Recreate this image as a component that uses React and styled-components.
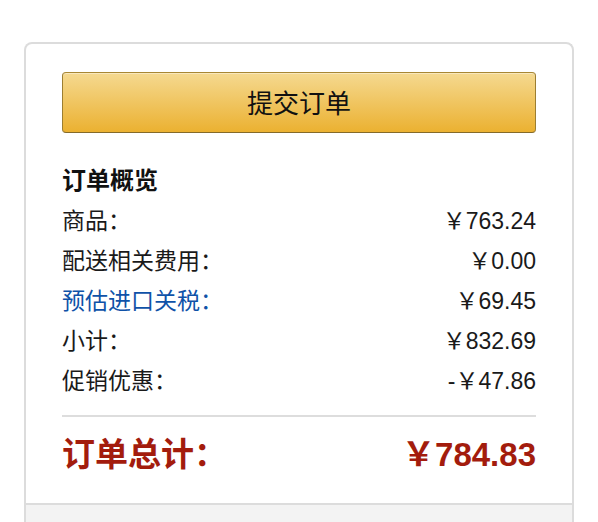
import React from "react";
import styled, { createGlobalStyle } from "styled-components";

const Global = createGlobalStyle`
  html, body { margin: 0; padding: 0; background: #fff; }
  body { font-family: "Liberation Sans", "Noto Sans CJK SC", sans-serif; color: #111; }
`;

const Page = styled.div`
  padding: 42px 24px 0;
`;

const Card = styled.div`
  border: 2px solid #dcdcdc;
  border-bottom: none;
  border-radius: 8px 8px 0 0;
  overflow: hidden;
`;

const Section = styled.div`
  padding: 28px 36px 26px;
`;

const SubmitButton = styled.button`
  display: block;
  width: 100%;
  height: 61px;
  border: 1px solid;
  border-color: #a88734 #9c7e31 #846a29;
  border-radius: 4px;
  background: linear-gradient(to bottom, #f5d990, #ebb131);
  box-shadow: inset 0 1px 0 rgba(255, 255, 255, 0.4);
  font-family: "Noto Sans CJK SC", sans-serif;
  font-size: 26px;
  color: #111;
  cursor: pointer;
  padding: 0 0 2px;
`;

const Heading = styled.h3`
  margin: 26px 0 0;
  font-family: "Noto Sans CJK SC", sans-serif;
  font-size: 24px;
  font-weight: 700;
  line-height: 40px;
  color: #111;
`;

const Row = styled.div`
  display: flex;
  justify-content: space-between;
  align-items: center;
  height: 40px;
  font-size: 23px;
  color: ${(p) => (p.$link ? "#0f52a8" : "#1a1a1a")};
`;

const Label = styled.span`
  font-family: "Noto Sans CJK SC", sans-serif;
`;

const Amount = styled.span`
  font-family: "Liberation Sans", "Noto Sans CJK SC", sans-serif;
  color: #1a1a1a;
`;

const Divider = styled.hr`
  margin: 16px 0 0;
  border: none;
  border-top: 2px solid #dddddd;
`;

const TotalRow = styled.div`
  display: flex;
  justify-content: space-between;
  align-items: center;
  height: 50px;
  margin-top: 10px;
  color: #a31c0d;
  font-weight: 700;
  font-size: 33px;
`;

const TotalLabel = styled.span`
  font-family: "Noto Sans CJK SC", sans-serif;
  font-size: 33px;
`;

const TotalAmount = styled.span`
  font-family: "Liberation Sans", "Noto Sans CJK SC", sans-serif;
`;

const Footer = styled.div`
  height: 40px;
  background: #f3f3f3;
  border-top: 2px solid #dcdcdc;
`;

const rows = [
  { label: "商品：", value: "￥763.24" },
  { label: "配送相关费用：", value: "￥0.00" },
  { label: "预估进口关税：", value: "￥69.45", link: true },
  { label: "小计：", value: "￥832.69" },
  { label: "促销优惠：", value: "-￥47.86" },
];

export default function App() {
  return (
    <>
      <Global />
      <Page>
        <Card>
          <Section>
            <SubmitButton>提交订单</SubmitButton>
            <Heading>订单概览</Heading>
            {rows.map((r) => (
              <Row key={r.label} $link={r.link}>
                <Label>{r.label}</Label>
                <Amount>{r.value}</Amount>
              </Row>
            ))}
            <Divider />
            <TotalRow>
              <TotalLabel>订单总计：</TotalLabel>
              <TotalAmount>￥784.83</TotalAmount>
            </TotalRow>
          </Section>
          <Footer />
        </Card>
      </Page>
    </>
  );
}
